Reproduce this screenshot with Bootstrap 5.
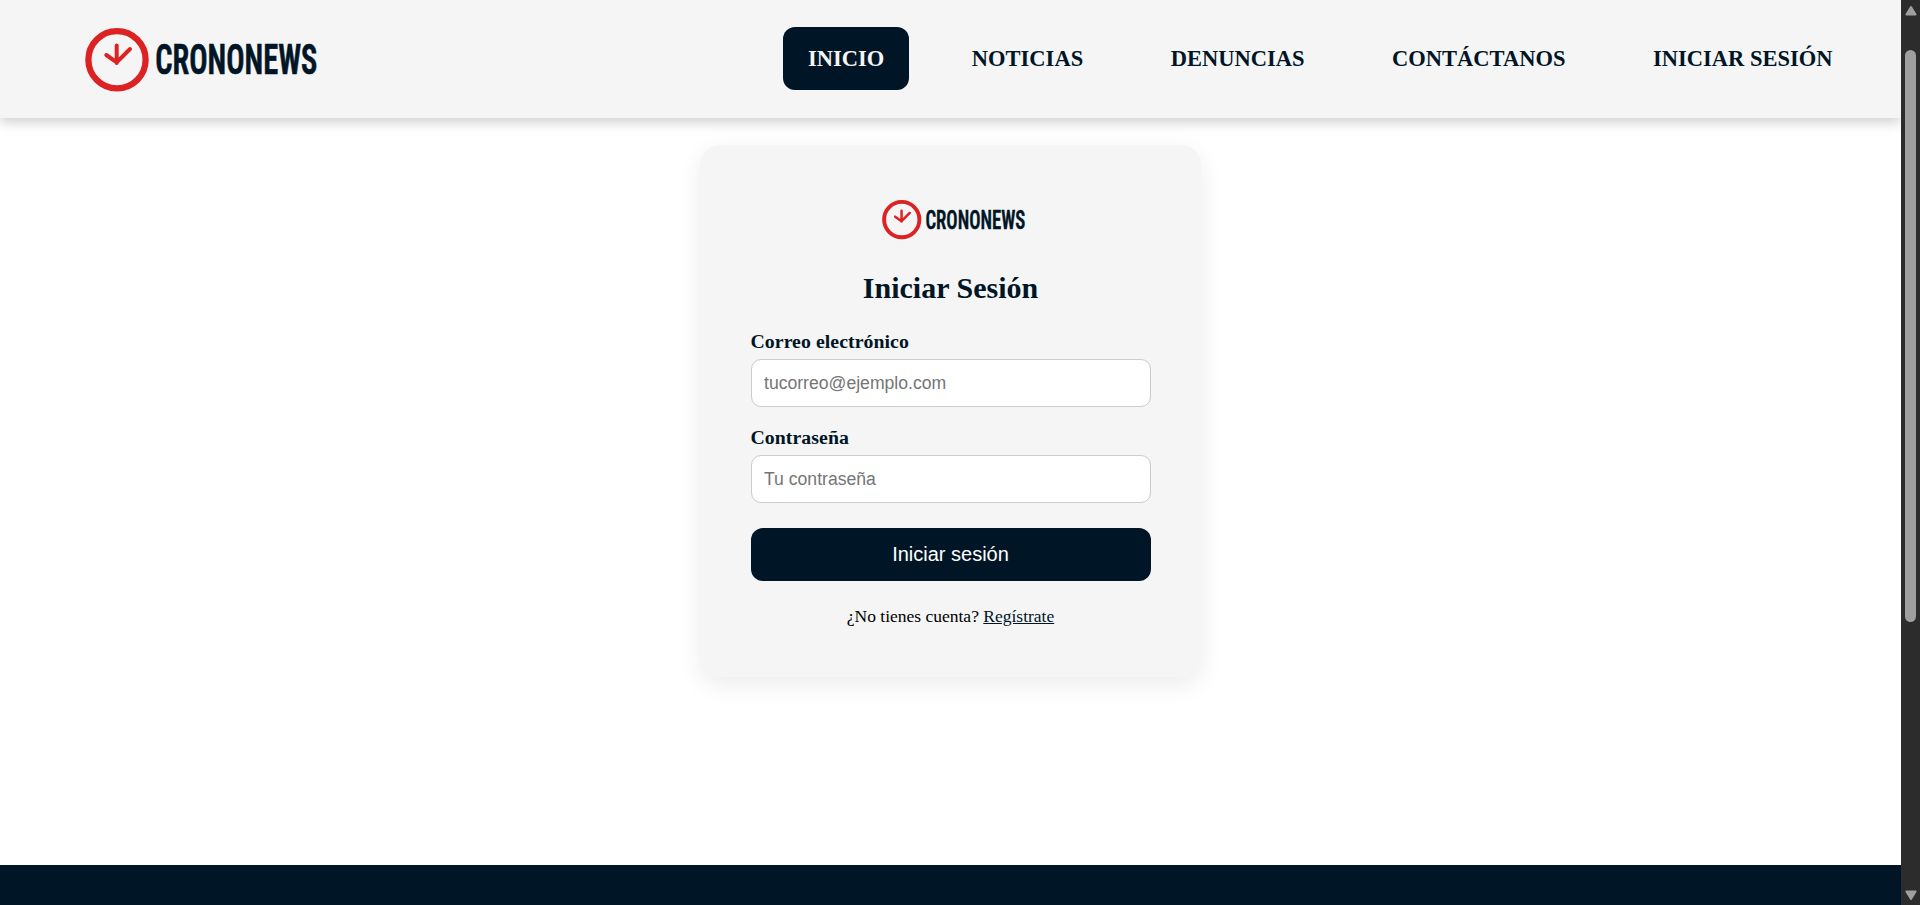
<!DOCTYPE html>
<html lang="es">
<head>
<meta charset="utf-8">
<meta name="viewport" content="width=device-width, initial-scale=1">
<title>Crononews - Iniciar Sesión</title>
<link href="https://cdn.jsdelivr.net/npm/bootstrap@5.3.0/dist/css/bootstrap.min.css" rel="stylesheet">
<style>
  :root { --navy: #001526; --paper: #f5f5f5; }
  body { font-family: "Liberation Serif", "Times New Roman", serif; color: #000; background: #fff; }
  .page-main { width: 1901px; }
  .site-header { height: 118px; padding: 0 43.5px 1px 84.6px; background: var(--paper); box-shadow: 0 4px 12px rgba(0,0,0,.2); z-index: 2; }
  .brand-logo { width: 234px; height: 64px; margin-top: 2px; overflow: visible; }
  .brand-logo-sm { width: 144.4px; height: 39.5px; margin-left: 131.6px; overflow: visible; }
  .logo-word { font-family: Roboto, sans-serif; font-weight: 600; font-stretch: 75%; font-size: 43px; }
  .site-nav { gap: 37.6px; }
  .site-nav .nav-link { color: var(--navy); font-size: 22.5px; font-weight: 700; line-height: 25px; padding: 19px 25px; border-radius: 12px; }
  .site-nav .nav-link.active { background: var(--navy); color: var(--paper); }
  .login-card { width: 501px; height: 532px; margin: 27px auto 0; padding: 55px 50.5px 0; border: 0; border-radius: 20px; background: #f5f5f5; box-shadow: 0 8px 24px rgba(0,0,0,.08); }
  .login-title { color: var(--navy); font-size: 30px; font-weight: 700; line-height: 34px; margin: 31.5px 0 25px; }
  .login-card .form-label { color: var(--navy); font-size: 19.8px; letter-spacing: .06px; font-weight: 700; line-height: 22px; margin: 0 0 7px; }
  .login-card .form-control { height: 48px; padding: 0 12.5px; border: 1px solid #ccc; border-radius: 10px; font-family: "Liberation Sans", Arial, sans-serif; font-size: 17.6px; }
  .login-card .form-control::placeholder { color: #757575; opacity: 1; }
  .field-gap { margin-top: 19px; }
  .btn-login { height: 53px; margin-top: 25px; padding: 0 0 2px; border: 0; border-radius: 12px; background: var(--navy); color: #fff; font-family: "Liberation Sans", Arial, sans-serif; font-size: 20px; }
  .signup { font-size: 17.5px; line-height: 20px; margin-top: 25px; }
  .signup a { color: var(--navy); }
  .site-footer { height: 40px; background: var(--navy); }
  .scroll-track { width: 19px; background: #2c2c2c; }
  .scroll-arrow { margin: 5px 0 4px; }
  .scroll-thumb { width: 11px; height: 572px; border-radius: 6px; background: #9f9f9f; margin-top: 30px; }
</style>
</head>
<body class="vh-100 overflow-hidden d-flex">
<svg class="position-absolute overflow-visible" width="1" height="1" aria-hidden="true">
  <symbol id="logo" viewBox="0 0 234 64" overflow="visible">
    <circle cx="32" cy="31.7" r="28.6" fill="none" stroke="#dc2222" stroke-width="6.3"/>
    <path d="M31.7 17.5v17.5M21.3 27l10.4 7.4L45 21" fill="none" stroke="#dc2222" stroke-width="4" stroke-linecap="round" stroke-linejoin="round"/>
    <text class="logo-word" x="70.3" y="46.2" textLength="162" lengthAdjust="spacingAndGlyphs" fill="#001526" stroke="#001526" stroke-width=".7">CRONONEWS</text>
  </symbol>
</svg>
<div class="page-main d-flex flex-column flex-shrink-0 overflow-hidden">
  <header class="site-header navbar d-flex align-items-center justify-content-between flex-nowrap position-relative">
    <a href="#" class="d-flex" aria-label="Crononews"><svg class="brand-logo"><use href="#logo"/></svg></a>
    <nav class="site-nav nav flex-nowrap">
      <a class="nav-link active" href="#">INICIO</a>
      <a class="nav-link" href="#">NOTICIAS</a>
      <a class="nav-link" href="#">DENUNCIAS</a>
      <a class="nav-link" href="#">CONTÁCTANOS</a>
      <a class="nav-link" href="#">INICIAR SESIÓN</a>
    </nav>
  </header>
  <main class="flex-grow-1">
    <form class="login-card card">
      <svg class="brand-logo-sm"><use href="#logo"/></svg>
      <h2 class="login-title text-center">Iniciar Sesión</h2>
      <div>
        <label class="form-label d-block" for="mail">Correo electrónico</label>
        <input class="form-control" id="mail" type="email" placeholder="tucorreo@ejemplo.com">
      </div>
      <div class="field-gap">
        <label class="form-label d-block" for="pass">Contraseña</label>
        <input class="form-control" id="pass" type="password" placeholder="Tu contraseña">
      </div>
      <button class="btn btn-login w-100" type="button">Iniciar sesión</button>
      <p class="signup text-center mb-0">¿No tienes cuenta? <a href="#">Regístrate</a></p>
    </form>
  </main>
  <footer class="site-footer"></footer>
</div>
<div class="scroll-track d-flex flex-column align-items-center flex-shrink-0">
  <svg class="scroll-arrow" width="14" height="11" viewBox="0 0 14 11"><path d="M7 2l4.6 7.5H2.4z" fill="#9f9f9f" stroke="#9f9f9f" stroke-width="2" stroke-linejoin="round"/></svg>
  <div class="scroll-thumb"></div>
  <svg class="mt-auto mb-1" width="14" height="11" viewBox="0 0 14 11"><path d="M7 9L2.4 1.5h9.2z" fill="#9f9f9f" stroke="#9f9f9f" stroke-width="2" stroke-linejoin="round"/></svg>
</div>
<script src="https://cdn.jsdelivr.net/npm/bootstrap@5.3.0/dist/js/bootstrap.bundle.min.js"></script>
</body>
</html>
